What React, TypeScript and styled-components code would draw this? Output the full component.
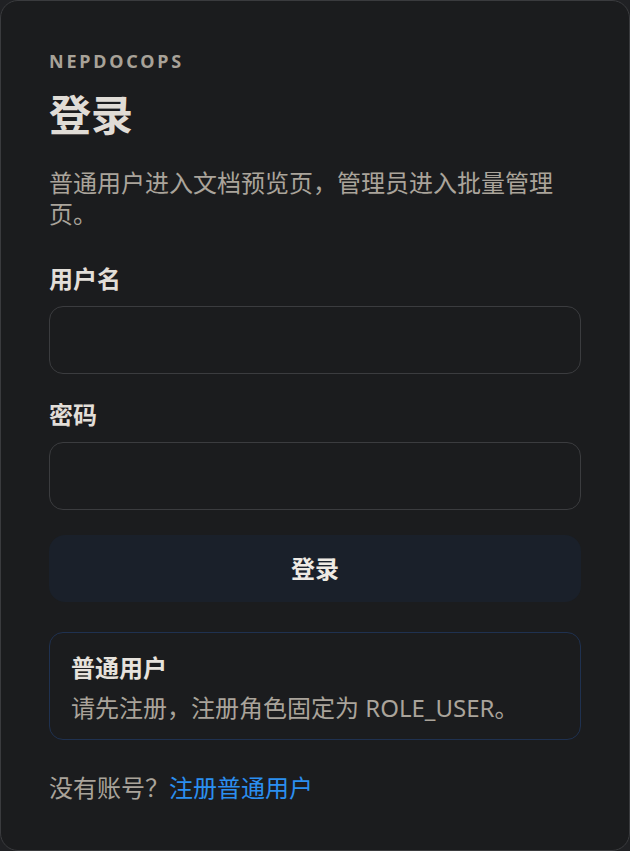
import * as React from 'react';
import styled, { createGlobalStyle } from 'styled-components';

const GlobalStyle = createGlobalStyle`
  html, body {
    margin: 0;
    padding: 0;
    background: #202124;
  }
  body {
    font-family: "Noto Sans", "Noto Sans CJK SC", sans-serif;
    -webkit-font-smoothing: antialiased;
  }
  * {
    box-sizing: border-box;
  }
`

const Card = styled.main`
  width: 630px;
  min-height: 851px;
  padding: 48px 48px 40px;
  background: #1b1c1e;
  border: 1px solid #3a3b3e;
  border-radius: 18px;
  display: flex;
  flex-direction: column;
`

const Eyebrow = styled.div`
  font-size: 18px;
  line-height: 24px;
  font-weight: 700;
  letter-spacing: 2.8px;
  color: #a8a298;
`

const Title = styled.h1`
  margin: 16px 0 0;
  font-size: 42px;
  line-height: 52px;
  font-weight: 700;
  color: #e0dcd6;
`

const Subtitle = styled.p`
  margin: 26px 0 0;
  font-size: 24px;
  line-height: 31px;
  color: #aaa49b;
`

const Form = styled.form`
  display: flex;
  flex-direction: column;
  margin-top: 35px;
`

const Field = styled.label<{ first?: boolean }>`
  display: flex;
  flex-direction: column;
  gap: 12px;
  margin-top: ${props => props.first ? '0' : '26px'};
`

const FieldLabel = styled.span`
  font-size: 24px;
  line-height: 30px;
  font-weight: 700;
  color: #e2ded8;
`

const Input = styled.input`
  height: 68px;
  width: 100%;
  padding: 0 20px;
  background: transparent;
  border: 1px solid #3b3c3f;
  border-radius: 14px;
  color: #e2ded8;
  font-size: 22px;
  font-family: inherit;
  outline: none;
`

const SubmitButton = styled.button`
  margin-top: 25px;
  height: 67px;
  width: 100%;
  background: #1a202a;
  border: none;
  border-radius: 16px;
  color: #eeeae4;
  font-family: inherit;
  font-size: 24px;
  line-height: 30px;
  font-weight: 700;
  cursor: pointer;
`

const InfoBox = styled.section`
  margin-top: 30px;
  padding: 20px 21px 16px;
  border: 1px solid #1f3150;
  border-radius: 14px;
  display: flex;
  flex-direction: column;
  gap: 10px;
`

const InfoTitle = styled.div`
  font-size: 24px;
  line-height: 30px;
  font-weight: 700;
  color: #e6e2dc;
`

const InfoText = styled.div`
  font-size: 24px;
  line-height: 30px;
  color: #aaa49b;
`

const Footer = styled.p`
  margin: 33px 0 0;
  font-size: 24px;
  line-height: 30px;
  color: #aaa49b;
`

const Link = styled.a`
  color: #2b8ff0;
  text-decoration: none;
`

export default function App() {
  return <>
    <GlobalStyle />
    <Card>
      <Eyebrow>NEPDOCOPS</Eyebrow>
      <Title>登录</Title>
      <Subtitle>普通用户进入文档预览页，管理员进入批量管理页。</Subtitle>
      <Form onSubmit={e => e.preventDefault()}>
        <Field first>
          <FieldLabel>用户名</FieldLabel>
          <Input type="text" />
        </Field>
        <Field>
          <FieldLabel>密码</FieldLabel>
          <Input type="password" />
        </Field>
        <SubmitButton type="submit">登录</SubmitButton>
      </Form>
      <InfoBox>
        <InfoTitle>普通用户</InfoTitle>
        <InfoText>请先注册，注册角色固定为 ROLE_USER。</InfoText>
      </InfoBox>
      <Footer>没有账号？<Link href="#">注册普通用户</Link></Footer>
    </Card>
  </>;
}
